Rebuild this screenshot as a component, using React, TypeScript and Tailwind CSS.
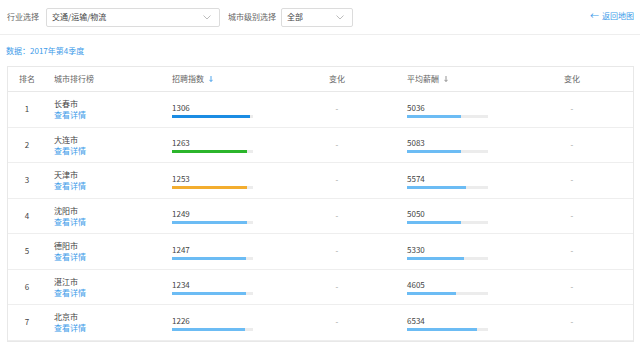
import React from 'react';

const font = { fontFamily: '"Noto Sans CJK SC", "Noto Sans", sans-serif' };

type Row = {
  rank: number;
  city: string;
  index: number;
  salary: number;
  color: string;
};

const rows: Row[] = [
  { rank: 1, city: '长春市', index: 1306, salary: 5036, color: 'bg-[#1b8ce3]' },
  { rank: 2, city: '大连市', index: 1263, salary: 5083, color: 'bg-[#2bb52b]' },
  { rank: 3, city: '天津市', index: 1253, salary: 5574, color: 'bg-[#f3ad2f]' },
  { rank: 4, city: '沈阳市', index: 1249, salary: 5050, color: 'bg-[#6cbcf4]' },
  { rank: 5, city: '德阳市', index: 1247, salary: 5330, color: 'bg-[#6cbcf4]' },
  { rank: 6, city: '湛江市', index: 1234, salary: 4605, color: 'bg-[#6cbcf4]' },
  { rank: 7, city: '北京市', index: 1226, salary: 6534, color: 'bg-[#6cbcf4]' },
];

const INDEX_MAX = 1356;
const SALARY_MAX = 7600;

const cols = 'grid grid-cols-[38px_118px_125px_96px_124px_126px]';

const Chevron = () => (
  <svg width="8" height="5" viewBox="0 0 8 5" fill="none" stroke="#a0a0a0" strokeWidth="0.7">
    <path d="M0.5 0.5 L4 4 L7.5 0.5" />
  </svg>
);

const SortArrow = ({ color }: { color: string }) => (
  <svg width="4" height="6" viewBox="0 0 4 6" fill="none" stroke={color} strokeWidth="0.9">
    <path d="M2 0 V5.4 M0.4 3.8 L2 5.5 L3.6 3.8" />
  </svg>
);

const Select = ({ value, width }: { value: string; width: string }) => (
  <div className={`${width} h-[19px] border border-[#dcdcdc] rounded-[2px] flex items-center justify-between pl-[5px] pr-[8px] text-[8px] text-[#444]`}>
    <span>{value}</span>
    <Chevron />
  </div>
);

const Bar = ({ value, max, color }: { value: number; max: number; color: string }) => (
  <div className="w-[81px] h-[3px] bg-[#ececec] mt-[2px]">
    <div className={`h-full ${color}`} style={{ width: `${(value / max) * 100}%` }} />
  </div>
);

export default function App() {
  return (
    <div className="w-[640px] h-[345px] bg-white overflow-hidden" style={font}>
      <div className="h-[35px] border-b border-[#eeeeee] flex items-center pl-[7px] pr-[6px]">
        <span className="text-[8px] text-[#666] mr-[7px]">行业选择</span>
        <Select value="交通/运输/物流" width="w-[174px]" />
        <span className="text-[8px] text-[#666] ml-[8px] mr-[5px]">城市级别选择</span>
        <Select value="全部" width="w-[72px]" />
        <div className="ml-auto flex items-center gap-[3px] text-[8px] text-[#3d9be9] -mt-[3px]">
          <span className="text-[9px] leading-none">←</span>
          <span>返回地图</span>
        </div>
      </div>

      <div className="h-[31px] flex items-center pl-[6px] text-[8px] text-[#3d9be9]">数据：2017年第4季度</div>

      <div className="ml-[7px] w-[627px] border border-[#e8e8e8] text-[8px] text-[#444]">
        <div className={`${cols} h-[25px] items-center border-b border-[#e8e8e8] text-[#666]`}>
          <div className="text-center">排名</div>
          <div className="pl-[8px]">城市排行榜</div>
          <div className="pl-[8px] flex items-center gap-[5px]">
            <span>招聘指数</span>
            <SortArrow color="#3d9be9" />
          </div>
          <div className="text-center">变化</div>
          <div className="pl-[22px] flex items-center gap-[5px]">
            <span>平均薪酬</span>
            <SortArrow color="#888" />
          </div>
          <div className="text-center">变化</div>
        </div>

        {rows.map((r) => (
          <div key={r.rank} className={`${cols} h-[35.5px] items-center border-b border-[#eeeeee]`}>
            <div className="text-center">{r.rank}</div>
            <div className="pl-[8px] flex flex-col leading-[11px]">
              <span>{r.city}</span>
              <span className="text-[#3d9be9]">查看详情</span>
            </div>
            <div className="pl-[8px] flex flex-col leading-[11px] pt-[1px]">
              <span>{r.index}</span>
              <Bar value={r.index} max={INDEX_MAX} color={r.color} />
            </div>
            <div className="text-center text-[#999]">-</div>
            <div className="pl-[22px] flex flex-col leading-[11px] pt-[1px]">
              <span>{r.salary}</span>
              <Bar value={r.salary} max={SALARY_MAX} color="bg-[#6cbcf4]" />
            </div>
            <div className="text-center text-[#999]">-</div>
          </div>
        ))}
      </div>
    </div>
  );
}
